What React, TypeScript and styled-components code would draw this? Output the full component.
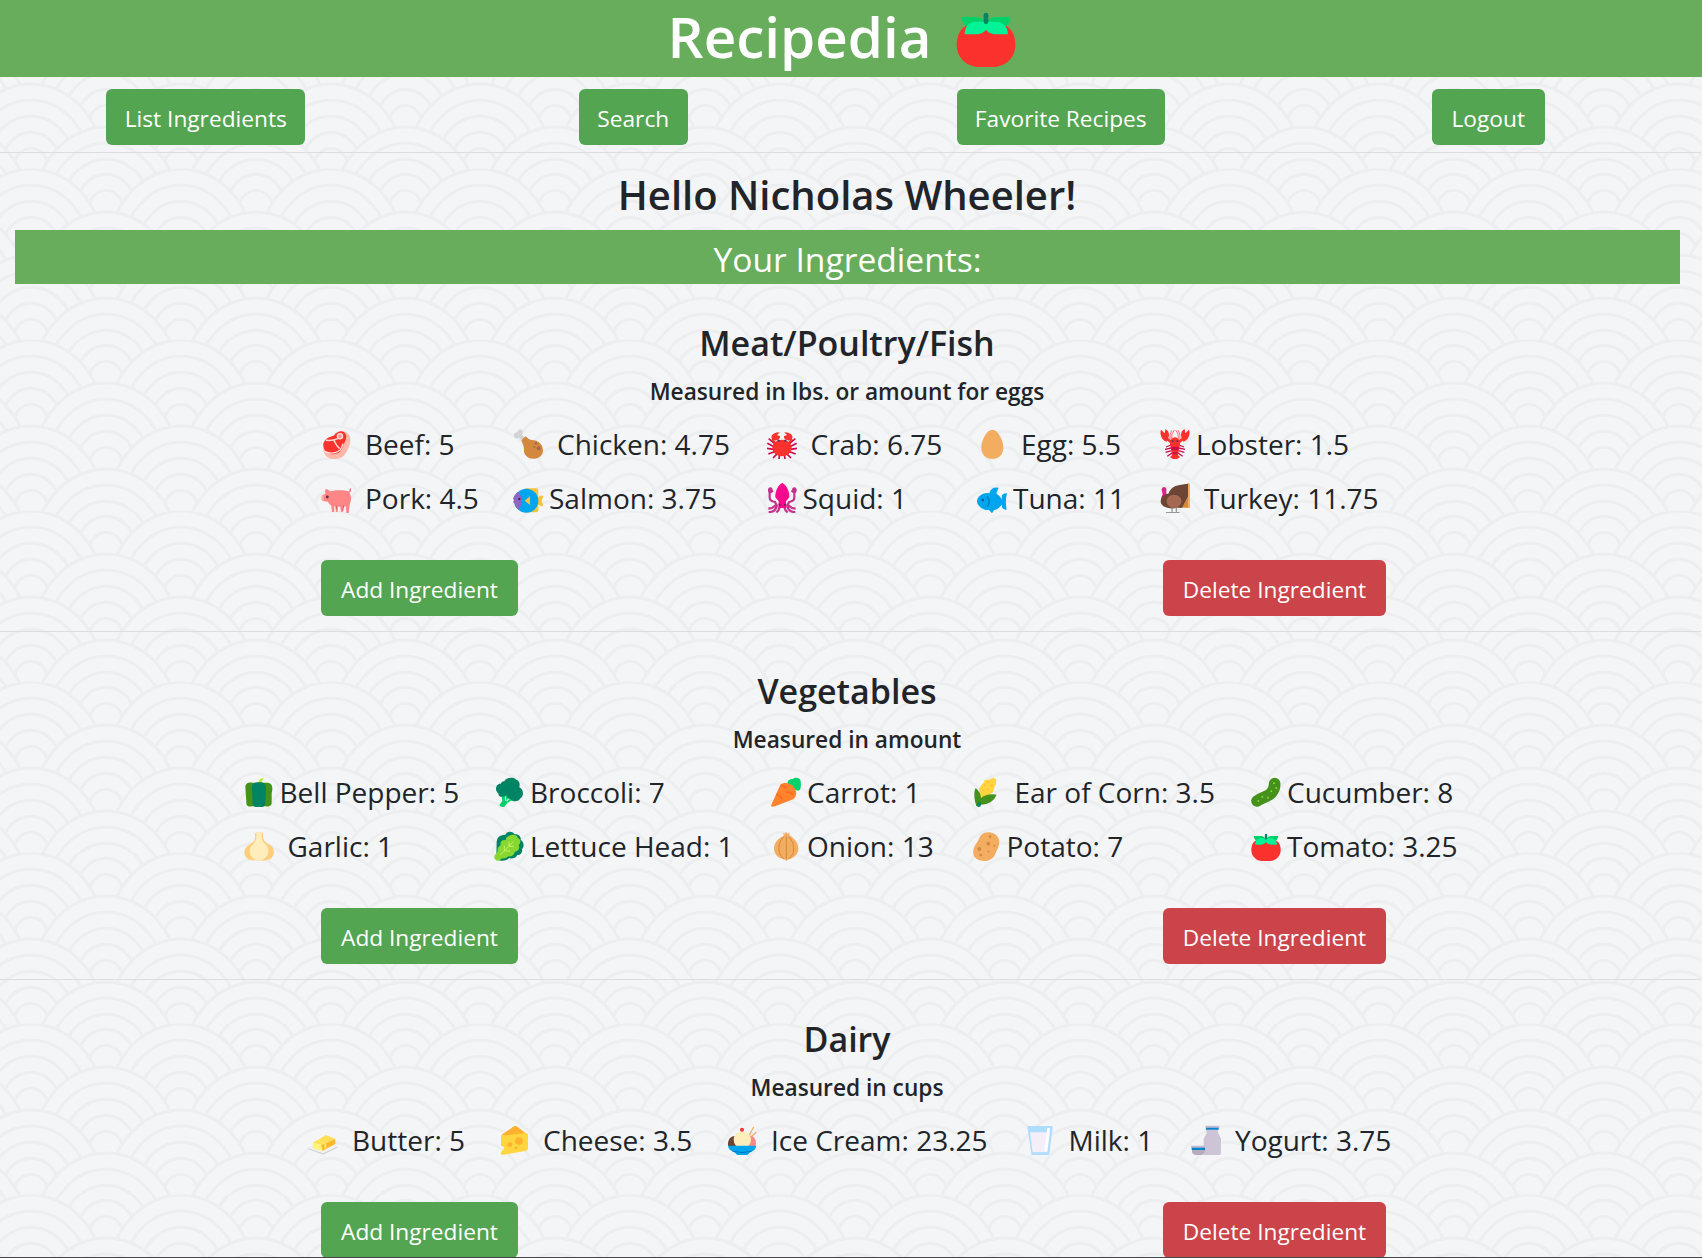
import React from "react";
import styled, { createGlobalStyle } from "styled-components";

const PAPER = "#f4f5f7";
const WAVE = "#edeef0";

/* Seigaiha wave tile: one full fan per cell plus its offset neighbours. */
const fan = (cx: number, top: number) =>
  [
    [73, 84],
    [59, 68],
    [44.5, 52],
    [30.5, 36],
    [17.5, 20],
  ]
    .map(([rx, ry]) => `<ellipse cx='${cx}' cy='${top + 84}' rx='${rx}' ry='${ry}'/>`)
    .join("");

const waveRows = [-85.5, -42.75, 0, 42.75, 85.5]
  .map((top, i) => (i % 2 === 0 ? fan(0, top) + fan(149.8, top) : fan(74.9, top)))
  .join("");

const waveTile = encodeURIComponent(
  `<svg xmlns='http://www.w3.org/2000/svg' width='149.8' height='85.5' viewBox='0 0 149.8 85.5'><g fill='${PAPER}' stroke='${WAVE}' stroke-width='2.9'>${waveRows}</g></svg>`
);

const GlobalStyle = createGlobalStyle`
  * { box-sizing: border-box; }
  body {
    margin: 0;
    overflow: hidden;
    color: #212529;
    font-family: "Open Sans", "Noto Sans", sans-serif;
  }
`;

const Page = styled.div`
  width: 100%;
  height: 1258px;
  overflow: hidden;
  border-bottom: 1px solid #444548;
  background-color: ${PAPER};
  background-image: url("data:image/svg+xml,${waveTile}");
  background-size: 149.8px 85.5px;
  background-position: 31px 84px;
`;

const Header = styled.header`
  display: flex;
  align-items: center;
  justify-content: center;
  height: 77px;
  padding: 0 18px 3px 0;
  background: #68ad5c;
  color: #fff;
`;

const Brand = styled.h1`
  margin: 0 25px 0 0;
  font-size: 56.5px;
  font-weight: 600;
  line-height: 72px;
`;

const Row = styled.div`
  width: 1710px;
  margin-left: -8px;
`;

const Nav = styled.nav`
  display: grid;
  grid-template-columns: repeat(4, 1fr);
  justify-items: center;
  padding: 12px 0 7px;
`;

const Button = styled.button<{ $width: number; $danger?: boolean }>`
  width: ${(p) => p.$width}px;
  height: 56px;
  padding: 4px 0 0;
  border: 0;
  border-radius: 6px;
  background: ${(p) => (p.$danger ? "#cb444a" : "#54a551")};
  color: #fff;
  font: 400 22.7px/36px "Open Sans", "Noto Sans", sans-serif;
  white-space: nowrap;
`;

const Rule = styled.hr`
  height: 1px;
  margin: 0 1px 0 0;
  border: 0;
  background: #dcdddf;
`;

const Greeting = styled.h2`
  margin: 17px 0 10px;
  font-size: 40px;
  font-weight: 600;
  line-height: 50px;
  text-align: center;
`;

const Banner = styled.div`
  height: 54px;
  margin: 0 22px 0 23px;
  padding-top: 4px;
  background: #68ad5c;
  color: #fff;
  font-size: 33.6px;
  line-height: 50px;
  text-align: center;
`;

const Category = styled.section`
  padding-top: 37px;
`;

const CategoryName = styled.h3`
  margin: 0;
  font-size: 34px;
  font-weight: 600;
  line-height: 44px;
  text-align: center;
`;

const Unit = styled.h4`
  margin: 11px 0 9px;
  font-size: 22.7px;
  font-weight: 600;
  line-height: 32px;
  text-align: center;
`;

const Pantry = styled.ul<{ $columns: string }>`
  display: grid;
  grid-template-columns: ${(p) => p.$columns};
  grid-auto-rows: 54px;
  justify-content: center;
  margin: 0;
  padding: 0;
  list-style: none;
`;

const Item = styled.li<{ $wide: boolean }>`
  display: flex;
  align-items: center;
  gap: ${(p) => (p.$wide ? 14 : 6)}px;
  font-size: 28px;
  line-height: 54px;
  white-space: nowrap;
`;

const Glyph = styled.svg<{ $size: number }>`
  flex: none;
  width: ${(p) => p.$size}px;
  height: ${(p) => p.$size}px;
`;

const Actions = styled.div`
  display: grid;
  grid-template-columns: 1fr 1fr;
  justify-items: center;
  padding: 35px 0 15px;
`;

const art: Record<string, React.ReactNode> = {
  beef: (
    <>
      <path d="M57 6C72 4 89 14 88 32C87 48 82 58 76 70C68 86 52 92 34 90C20 88 6 76 7 58Z" fill="#ffb8a8" />
      <path d="M38 20C46 8 60 3 68 9C80 17 76 32 69 44C64 55 62 68 50 73C34 79 14 74 8 56C2 38 18 24 38 20Z" fill="#fa312d" />
      <path d="M15 34Q40 36 55 26M39 35Q46 50 56 59" stroke="#ffd7cc" strokeWidth="4.5" fill="none" />
      <circle cx="57" cy="22" r="8" fill="#ff9c92" stroke="#ffe1d9" strokeWidth="3.5" />
      <path d="M10 67Q37 79 57 64Q63 55 66 44" stroke="#ffe1d9" strokeWidth="4" fill="none" />
    </>
  ),
  chicken: (
    <>
      <path d="M29 35L17 26C10 32 0 25 3 16C5 10 10 11 13 9C14 0 27-1 29 7C30 11 28 14 27 17L38 27Z" fill="#d3d3d3" />
      <path d="M25 34L38 22C44 28 48 32 56 33C76 33 90 46 90 64C90 80 76 91 60 89C42 88 31 76 33 60C33 52 28 43 25 34Z" fill="#d3883e" />
      <circle cx="69" cy="43" r="4" fill="#a56953" />
      <circle cx="64" cy="54" r="3" fill="#a56953" />
      <circle cx="77" cy="58" r="6" fill="#a56953" />
    </>
  ),
  crab: (
    <>
      <path d="M23 44L5 29M21 53L1 43M20 61L0 58M22 68L4 75M31 74L18 87M67 44L85 29M69 53L89 43M70 61L90 58M68 68L86 75M59 74L72 87M38 75L36 90M52 75L54 90" stroke="#ca0b4a" strokeWidth="5" />
      <path d="M28 46L15 30M62 46L75 30" stroke="#fa312d" strokeWidth="5" />
      <path d="M18 34C9 25 12 11 38 10L30 19L39 21C41 31 29 36 18 34ZM72 34C81 25 78 11 52 10L60 19L51 21C49 31 61 36 72 34Z" fill="#fa312d" />
      <ellipse cx="45" cy="57" rx="29" ry="25" fill="#fa312d" />
      <circle cx="35" cy="35" r="3.5" fill="#533566" />
      <circle cx="55" cy="35" r="3.5" fill="#533566" />
    </>
  ),
  egg: <path d="M46 2C63 2 79 33 79 56C79 76 65 90 46 90C27 90 13 76 13 56C13 33 29 2 46 2Z" fill="#f3ad61" />,
  lobster: (
    <>
      <path d="M33 48L18 54M34 57L15 61M35 65L17 70M37 71L22 82M57 48L72 54M56 57L75 61M55 65L73 70M53 71L68 82" stroke="#ca0b4a" strokeWidth="4" fill="none" />
      <path d="M35 33Q33 12 43 3M55 33Q57 12 47 3M30 36Q28 15 35 4M60 36Q62 15 55 4" stroke="#ff6d72" strokeWidth="3" fill="none" />
      <path d="M39 44L19 28M51 44L71 28" stroke="#fa312d" strokeWidth="8" />
      <path d="M20 38C6 35-2 16 3 2L14 13L16 1C28 4 31 21 20 38ZM70 38C84 35 92 16 87 2L76 13L74 1C62 4 59 21 70 38Z" fill="#fa312d" />
      <path d="M45 25C54 25 63 38 59 52C57 64 53 77 52 82H38C37 77 33 64 31 52C27 38 36 25 45 25Z" fill="#fa312d" />
      <path d="M33 54H57L55 64H35ZM37 70H53L52 77H38Z" fill="#ca0b4a" />
      <path d="M39 76H51L60 84L50 91H40L30 84Z" fill="#fa312d" />
      <circle cx="38" cy="36" r="3" fill="#533566" />
      <circle cx="52" cy="36" r="3" fill="#533566" />
    </>
  ),
  pork: (
    <>
      <path d="M85 27Q91 20 87 17" stroke="#e96a70" strokeWidth="4" fill="none" />
      <path d="M30 65H39L40 87H33ZM43 67H51L50 87H45ZM57 66H67L65 87H60ZM74 60H87L83 90H76Z" fill="#ff8687" />
      <path d="M12 24L15 17L28 25C42 21 65 20 83 25C90 34 92 48 88 59C84 69 72 72 60 71C40 73 26 68 21 56L9 55C0 53 1 37 6 35L13 33Z" fill="#ff8687" />
      <path d="M1 47C1 39 4 36 8 36V54C3 54 1 51 1 47Z" fill="#fdb2ac" />
      <circle cx="19" cy="42" r="4.2" fill="#5b3145" />
      <path d="M46 68V80M68 67L65 84" stroke="#d95e68" strokeWidth="3" />
    </>
  ),
  salmon: (
    <>
      <path d="M37 16H70Q76 16 76 22V43Q80 38 87 37Q90 38 90 43L86 54L90 65Q90 70 87 70Q80 68 76 64V82Q76 88 70 88H37Z" fill="#f9c23c" />
      <circle cx="40" cy="53" r="36" fill="#00a6ed" />
      <path d="M16 26Q27 39 26 53Q25 70 17 80C8 75 5 68 4 61L0 58L3 52L0 47C4 37 7 31 16 26Z" fill="#8d65c5" />
      <circle cx="19" cy="48" r="3.5" fill="#402a32" />
      <path d="M51 40V66L35 53Z" fill="#f9c23c" />
    </>
  ),
  squid: (
    <>
      <path d="M18 23L8 28V44Q8 54 24 57L28 65Q18 76 4 77M30 65Q27 88 5 87M73 23L82 28V44Q82 54 66 57L62 65Q72 76 86 77M60 65Q63 88 85 87M39 64Q39 81 28 88M51 64Q51 81 62 88" stroke="#c3338b" strokeWidth="6.5" fill="none" />
      <ellipse cx="10" cy="22" rx="7" ry="9" fill="#c3338b" />
      <ellipse cx="82" cy="22" rx="7" ry="9" fill="#c3338b" />
      <path d="M46 0C59 6 68 26 67 43L57 55L58 75H34L35 55L25 43C24 24 34 5 46 0Z" fill="#f70a8d" />
      <circle cx="38" cy="65" r="3" fill="#702045" />
      <circle cx="54" cy="65" r="3" fill="#702045" />
      <circle cx="52" cy="37" r="5" fill="#d3168d" />
    </>
  ),
  tuna: (
    <>
      <path d="M37 31Q42 10 65 14L58 31C66 38 71 43 74 49L75 36Q81 29 90 31Q84 54 89 80Q74 81 74 65C67 76 58 80 51 81L45 91L36 81C16 83 1 68 0 55C0 43 16 27 37 31Z" fill="#00a6ed" />
      <path d="M30 40Q43 54 31 70" fill="none" stroke="#0074ba" strokeWidth="3.5" />
      <circle cx="17" cy="51" r="4" fill="#14578a" />
    </>
  ),
  turkey: (
    <>
      <path d="M58 9L88 1V74H61L34 60Z" fill="#d3883e" />
      <path d="M84 2H90V74H84Z" fill="#f3ad61" />
      <path d="M84 2V40L66 74H39L24 35Q31 10 59 6Z" fill="#6d4534" />
      <path d="M6 25Q2 14 12 12Q22 14 19 25V40H9Z" fill="#d6248b" />
      <path d="M10 32Q4 38 3 49L14 50V36Z" fill="#f70a8d" />
      <path d="M17 34C35 26 58 41 61 59C57 77 34 80 17 73C-2 66-4 45 17 34Z" fill="#6d4534" />
      <ellipse cx="42" cy="55" rx="22" ry="20" fill="#a56953" />
      <path d="M36 74V88M49 74V88M18 89H59" stroke="#999" strokeWidth="4" />
    </>
  ),
  pepper: (
    <>
      <path d="M39 19Q44 15 48 6L58 3Q60 5 56 9Q53 11 54 19Z" fill="#b7ed38" />
      <path d="M24 17H66C84 16 88 28 83 48V76C84 88 74 90 65 88H24C15 90 6 88 7 76L4 30C4 20 13 16 24 17Z" fill="#44911b" />
      <path d="M45 16C58 15 67 20 66 32L64 78C62 92 53 91 45 89C37 91 27 92 26 78L24 32C23 20 32 16 45 16Z" fill="#008463" />
    </>
  ),
  broccoli: (
    <>
      <path d="M21 46L25 72L16 84Q21 92 31 89L41 77L63 65L72 49Z" fill="#00d26a" />
      <path d="M34 58L35 71M48 62L38 72" stroke="#d5f7e4" strokeWidth="3.5" />
      <path d="M31 13C37 1 58-1 67 8C78 12 78 22 76 31C89 37 91 58 79 64C75 75 56 76 49 66C42 66 39 60 37 54C30 63 12 61 13 49C1 42 5 19 20 20Q24 12 31 13Z" fill="#008463" />
    </>
  ),
  garlic: (
    <>
      <path d="M33 7Q45 0 57 7V20C59 31 69 36 80 43C95 54 92 79 75 86Q45 91 16 86C-2 79-4 55 11 44C23 36 33 31 33 20Z" fill="#ffce7c" />
      <path d="M37 5Q45 2 53 5V22C55 37 73 41 73 59C73 75 61 88 45 88C29 88 17 75 17 59C17 42 36 37 37 22Z" fill="#ffeebc" />
    </>
  ),
  lettuce: (
    <>
      <path d="M34 11C38 0 57-1 62 10C74 8 82 18 80 27C91 33 91 48 84 54C87 65 78 74 70 72C66 82 52 85 46 81C35 92 17 91 7 83L8 31C10 16 20 12 34 11Z" fill="#008463" />
      <path d="M45 15C54 8 70 10 72 21C82 26 80 37 74 42C79 52 72 62 63 62C60 72 52 78 43 76C34 87 22 78 18 88C8 93-1 84 1 77C2 68 10 68 11 60C9 52 15 45 20 43C17 31 27 25 35 28C35 21 39 16 45 15Z" fill="#86d72f" />
      <path d="M19 72L58 32M31 60V44M31 60H48M45 46V32M45 46H60" stroke="#c4ef65" strokeWidth="3" fill="none" />
    </>
  ),
  carrot: (
    <>
      <path d="M52 25C44 12 57 4 66 6C71-1 84 2 88 8C91 20 90 33 86 39C77 44 66 36 62 30Z" fill="#00d26a" />
      <path d="M28 23C39 14 65 17 73 38C79 50 74 64 63 68L12 88Q-3 92 1 83Z" fill="#ff822d" />
      <path d="M16 52Q29 57 35 68M45 45Q58 44 66 53M31 25Q42 27 46 33" stroke="#ff6723" strokeWidth="5" fill="none" />
    </>
  ),
  onion: (
    <>
      <path d="M37 4L40 9L45 3L50 9L55 3V13C69 22 82 35 82 53C82 71 66 83 52 85L46 90L39 85C22 82 9 70 9 52C9 34 23 22 38 14Z" fill="#f3ad61" />
      <path d="M39 17Q19 35 25 65Q30 78 39 84M53 17Q72 35 67 65Q62 78 53 84M46 16V84" fill="none" stroke="#d3883e" strokeWidth="3" />
    </>
  ),
  corn: (
    <>
      <path d="M26 69L24 33L38 18L42 8L55 8L67 2L76 7L75 22L70 31L67 44L53 55L44 72Z" fill="#ffd640" />
      <path d="M38 20H45V27H38ZM49 11H56V18H49ZM58 23H65V30H58ZM47 33H54V40H47ZM58 41H64V47H58ZM35 37H41V43H35Z" fill="#fcb72e" opacity=".6" />
      <path d="M14 33Q30 47 30 63Q48 48 77 53Q66 82 27 84L16 87C9 66 8 44 14 33Z" fill="#44911b" />
      <path d="M21 77Q29 72 30 81Q31 91 21 90Q14 84 21 77Z" fill="#008463" />
    </>
  ),
  potato: (
    <>
      <path d="M30 13C41-2 75 1 83 23C90 41 77 57 72 71C63 91 34 95 17 84C-2 70 9 45 19 33C23 26 25 19 30 13Z" fill="#f3ad61" />
      <g fill="#d3883e">
        <circle cx="57" cy="17" r="4" />
        <circle cx="52" cy="38" r="6" />
        <circle cx="25" cy="54" r="6" />
        <circle cx="70" cy="44" r="3" />
        <circle cx="52" cy="62" r="3" />
        <circle cx="29" cy="72" r="4" />
      </g>
    </>
  ),
  cucumber: (
    <>
      <path d="M71 20C71 32 68 40 60 49C49 60 32 61 18 72" stroke="#44911b" strokeWidth="35" strokeLinecap="round" fill="none" />
      <g fill="#86d72f">
        <circle cx="69" cy="19" r="3" />
        <circle cx="76" cy="33" r="3" />
        <circle cx="61" cy="43" r="3" />
        <circle cx="51" cy="62" r="3" />
        <circle cx="34" cy="59" r="3" />
        <circle cx="22" cy="72" r="3" />
      </g>
    </>
  ),
  tomato: (
    <>
      <path d="M26 25H64C82 27 89 40 89 57C89 76 74 90 55 90H35C16 90 1 76 1 57C1 40 8 27 26 25Z" fill="#fa312d" />
      <path d="M8 15H29C39 15 44 21 45 30H20C14 30 9 24 8 15ZM82 15H61C51 15 46 21 45 30H70C76 30 81 24 82 15Z" fill="#00d26a" />
      <path d="M29 22H61C72 23 78 31 78 41H62C54 41 49 39 45 34C41 39 36 41 28 41H13C13 31 18 23 29 22Z" fill="#00f397" />
      <path d="M45 12V22" stroke="#008463" strokeWidth="7" strokeLinecap="round" />
    </>
  ),
  butter: (
    <>
      <path d="M2 69L45 84L88 64V68L45 89L2 73Z" fill="#d3d3d3" />
      <path d="M2 69L45 54L88 64L45 85Z" fill="#f1f1f2" />
      <path d="M15 53L54 30L82 42L40 60Z" fill="#ffdf55" />
      <path d="M15 53L40 60V78L14 69Z" fill="#fff478" />
      <path d="M40 60L82 42V57L43 78Z" fill="#fcb72e" />
      <path d="M24 48L30 45L55 53V70L49 73V56Z" fill="#ffe45f" />
    </>
  ),
  cheese: (
    <>
      <path d="M6 31L43 5Q50 0 57 7L84 28L48 40Z" fill="#ffb02e" />
      <path d="M6 32L83 24Q87 25 87 30V71Q86 77 79 78L10 90Q5 89 6 84L9 77C18 74 17 62 6 63Z" fill="#ffd640" />
      <circle cx="60" cy="48" r="11.5" fill="#ffb02e" />
      <circle cx="33" cy="59" r="7" fill="#ffb02e" />
      <circle cx="51" cy="69" r="4" fill="#ffb02e" />
    </>
  ),
  icecream: (
    <>
      <path d="M67 30L80 6M75 33L88 22" stroke="#f3ad61" strokeWidth="4" />
      <path d="M3 63C1 40 15 29 31 34L36 63Z" fill="#6d4534" />
      <path d="M55 63L62 32C79 28 90 42 86 63Z" fill="#ff8687" />
      <circle cx="46" cy="45" r="26" fill="#ffeebc" />
      <path d="M3 62H88Q86 76 71 81L61 90H31L21 81Q5 76 3 62Z" fill="#00a6ed" />
      <path d="M17 79Q45 86 74 79" stroke="#0074ba" strokeWidth="3" fill="none" />
      <circle cx="45" cy="14" r="6" fill="#fa312d" />
    </>
  ),
  milk: (
    <>
      <path d="M7 4Q7 3 10 3H80Q84 3 83 7L73 87Q73 90 68 90H24Q19 90 19 86Z" fill="#aeddff" />
      <path d="M15 22H75L67 82H23Z" fill="#f3eef8" />
      <path d="M67 9H75L66 79H58Z" fill="#fff" />
    </>
  ),
  yogurt: (
    <>
      <path d="M43 10H83C82 18 77 20 84 28L90 42V84Q90 90 84 90H38V42L45 28C51 22 44 18 43 10Z" fill="#cdc4d6" />
      <path d="M43 3Q43 2 46 2H84L85 8H43Z" fill="#c9bad0" />
      <path d="M45 8H83V14H45Z" fill="#0084ce" />
      <path d="M3 67H42V78Q40 90 30 90H14Q3 88 3 77Z" fill="#b4acbc" />
      <path d="M0 62H42V68H0Z" fill="#c9bad0" />
      <path d="M2 68H42V75H2Z" fill="#0084ce" />
    </>
  ),
};

const FoodIcon = ({ name, size = 30 }: { name: string; size?: number }) => (
  <Glyph $size={size} viewBox="0 0 90 90" aria-hidden="true">
    {art[name]}
  </Glyph>
);

/* icon, label, whether a space separates the two */
type Food = [string, string, boolean];

const categories: { name: string; unit: string; columns: string; foods: Food[] }[] = [
  {
    name: "Meat/Poultry/Fish",
    unit: "Measured in lbs. or amount for eggs",
    columns: "192px 253.5px 210.5px 183px 213px",
    foods: [
      ["beef", "Beef: 5", true],
      ["chicken", "Chicken: 4.75", true],
      ["crab", "Crab: 6.75", true],
      ["egg", "Egg: 5.5", true],
      ["lobster", "Lobster: 1.5", false],
      ["pork", "Pork: 4.5", true],
      ["salmon", "Salmon: 3.75", false],
      ["squid", "Squid: 1", false],
      ["tuna", "Tuna: 11", false],
      ["turkey", "Turkey: 11.75", true],
    ],
  },
  {
    name: "Vegetables",
    unit: "Measured in amount",
    columns: "250.5px 277px 199.5px 280.5px 199.5px",
    foods: [
      ["pepper", "Bell Pepper: 5", false],
      ["broccoli", "Broccoli: 7", false],
      ["carrot", "Carrot: 1", false],
      ["corn", "Ear of Corn: 3.5", true],
      ["cucumber", "Cucumber: 8", false],
      ["garlic", "Garlic: 1", true],
      ["lettuce", "Lettuce Head: 1", false],
      ["onion", "Onion: 13", false],
      ["potato", "Potato: 7", false],
      ["tomato", "Tomato: 3.25", false],
    ],
  },
  {
    name: "Dairy",
    unit: "Measured in cups",
    columns: "191px 228px 297.5px 166.5px 195px",
    foods: [
      ["butter", "Butter: 5", true],
      ["cheese", "Cheese: 3.5", true],
      ["icecream", "Ice Cream: 23.25", true],
      ["milk", "Milk: 1", true],
      ["yogurt", "Yogurt: 3.75", true],
    ],
  },
];

export default function App() {
  return (
    <Page>
      <GlobalStyle />
      <Header>
        <Brand>Recipedia</Brand>
        <FoodIcon name="tomato" size={60} />
      </Header>
      <Row>
        <Nav>
          <Button $width={199}>List Ingredients</Button>
          <Button $width={109}>Search</Button>
          <Button $width={208}>Favorite Recipes</Button>
          <Button $width={113}>Logout</Button>
        </Nav>
        <Rule />
        <Greeting>Hello Nicholas Wheeler!</Greeting>
        <Banner>Your Ingredients:</Banner>
        {categories.map((category) => (
          <Category key={category.name}>
            <CategoryName>{category.name}</CategoryName>
            <Unit>{category.unit}</Unit>
            <Pantry $columns={category.columns}>
              {category.foods.map(([icon, label, wide]) => (
                <Item key={icon} $wide={wide}>
                  <FoodIcon name={icon} />
                  <span>{label}</span>
                </Item>
              ))}
            </Pantry>
            <Actions>
              <Button $width={197}>Add Ingredient</Button>
              <Button $width={223} $danger>
                Delete Ingredient
              </Button>
            </Actions>
            <Rule />
          </Category>
        ))}
      </Row>
    </Page>
  );
}
